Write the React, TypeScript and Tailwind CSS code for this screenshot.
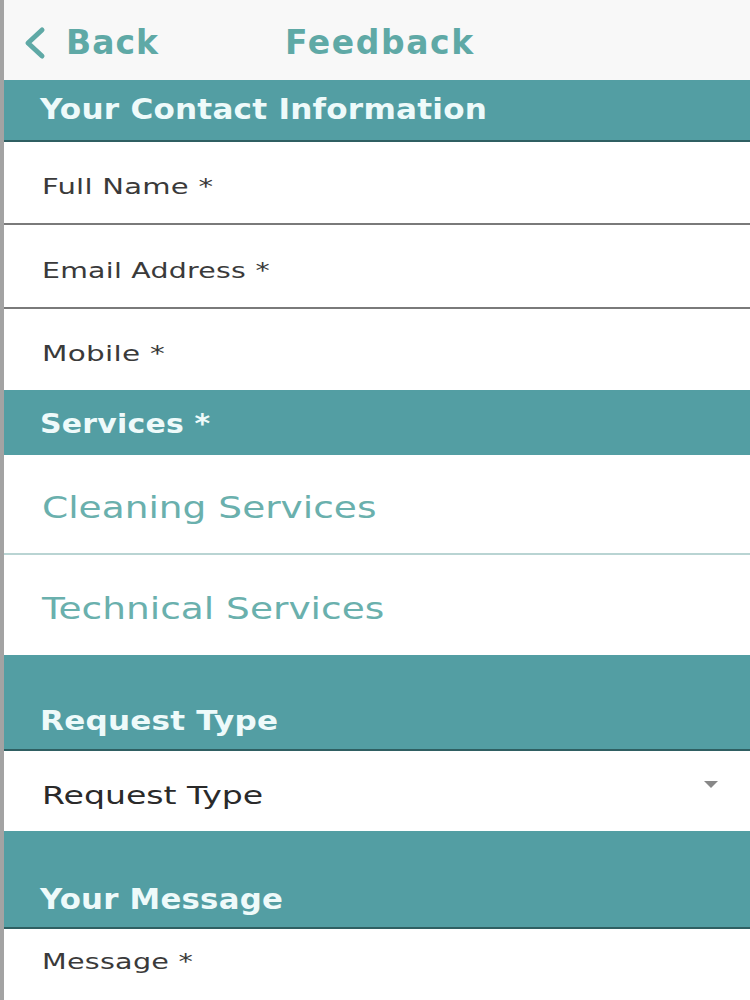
import React from "react";

const font = { fontFamily: '"DejaVu Sans", Verdana, sans-serif' };

function Field({ label, h, scale, border = true }: { label: string; h: string; scale: string; border?: boolean }) {
  return (
    <div className={`flex items-center bg-white pl-[38px] pt-[8px] ${border ? "border-b-2 border-[#7a7a7a]" : ""} ${h}`}>
      <span className={`inline-block origin-left ${scale} text-[22px] text-[#3a3a3a] tracking-[0.2px]`}>{label}</span>
    </div>
  );
}

export default function App() {
  return (
    <div style={font} className="w-[750px] h-[1000px] overflow-hidden bg-white border-l-4 border-[#a3a3a3] flex flex-col">
      <div className="h-[80px] shrink-0 bg-[#f8f8f8] flex items-center pt-[6px]">
        <div className="flex items-center pl-[16px] w-[281px]">
          <svg width="30" height="34" viewBox="0 0 30 34" className="mr-[16px]">
            <path d="M22 4 L8 17 L22 30" fill="none" stroke="#5fa9a6" strokeWidth="5" strokeLinecap="round" strokeLinejoin="round" />
          </svg>
          <span className="text-[33px] text-[#5fa9a6] font-semibold tracking-[1px]">Back</span>
        </div>
        <span className="text-[33px] text-[#5fa9a6] font-semibold tracking-[1.6px]">Feedback</span>
      </div>

      <div className="h-[62px] shrink-0 bg-[#539ea3] border-b-2 border-[#2f5f62] flex items-center pl-[36px]">
        <span className="inline-block origin-left scale-x-[1.11] text-[28px] font-bold text-[#eefafa] tracking-[0.2px]">Your Contact Information</span>
      </div>

      <Field label="Full Name *" h="h-[83px] shrink-0" scale="scale-x-[1.32]" />
      <Field label="Email Address *" h="h-[84px] shrink-0" scale="scale-x-[1.29]" />
      <Field label="Mobile *" h="h-[81px] shrink-0" scale="scale-x-[1.34]" border={false} />

      <div className="h-[65px] shrink-0 bg-[#539ea3] flex items-center pl-[36px] pt-[4px]">
        <span className="inline-block origin-left scale-x-[1.15] text-[26px] font-bold text-[#eefafa] tracking-[0.2px]">Services *</span>
      </div>

      <div className="h-[100px] shrink-0 bg-white border-b-2 border-[#b9d4d3] flex items-center pl-[38px] pt-[6px]">
        <span className="inline-block origin-left scale-x-[1.25] text-[30px] text-[#6ab0ad]">Cleaning Services</span>
      </div>
      <div className="h-[100px] shrink-0 bg-white flex items-center pl-[38px] pt-[6px]">
        <span className="inline-block origin-left scale-x-[1.25] text-[30px] text-[#6ab0ad]">Technical Services</span>
      </div>

      <div className="h-[96px] shrink-0 bg-[#539ea3] border-b-2 border-[#2f5f62] flex items-end pl-[36px] pb-[8px]">
        <span className="inline-block origin-left scale-x-[1.15] text-[27px] font-bold text-[#eefafa] tracking-[0.2px]">Request Type</span>
      </div>

      <div className="h-[80px] shrink-0 bg-white flex items-center justify-between pl-[38px] pr-[32px] pt-[10px]">
        <span className="inline-block origin-left scale-x-[1.38] text-[24px] text-[#2a2a2a]">Request Type</span>
        <svg width="14" height="8" viewBox="0 0 14 8" className="mb-[22px]">
          <path d="M0 0 L14 0 L7 7 Z" fill="#888" />
        </svg>
      </div>

      <div className="h-[98px] shrink-0 bg-[#539ea3] border-b-2 border-[#2f5f62] flex items-end pl-[36px] pb-[6px]">
        <span className="inline-block origin-left scale-x-[1.1] text-[28px] font-bold text-[#eefafa] tracking-[0.2px]">Your Message</span>
      </div>

      <div className="flex-1 bg-white pl-[38px] pt-[16px]">
        <span className="inline-block origin-left scale-x-[1.3] text-[22px] text-[#3a3a3a] tracking-[0.2px]">Message *</span>
      </div>
    </div>
  );
}
